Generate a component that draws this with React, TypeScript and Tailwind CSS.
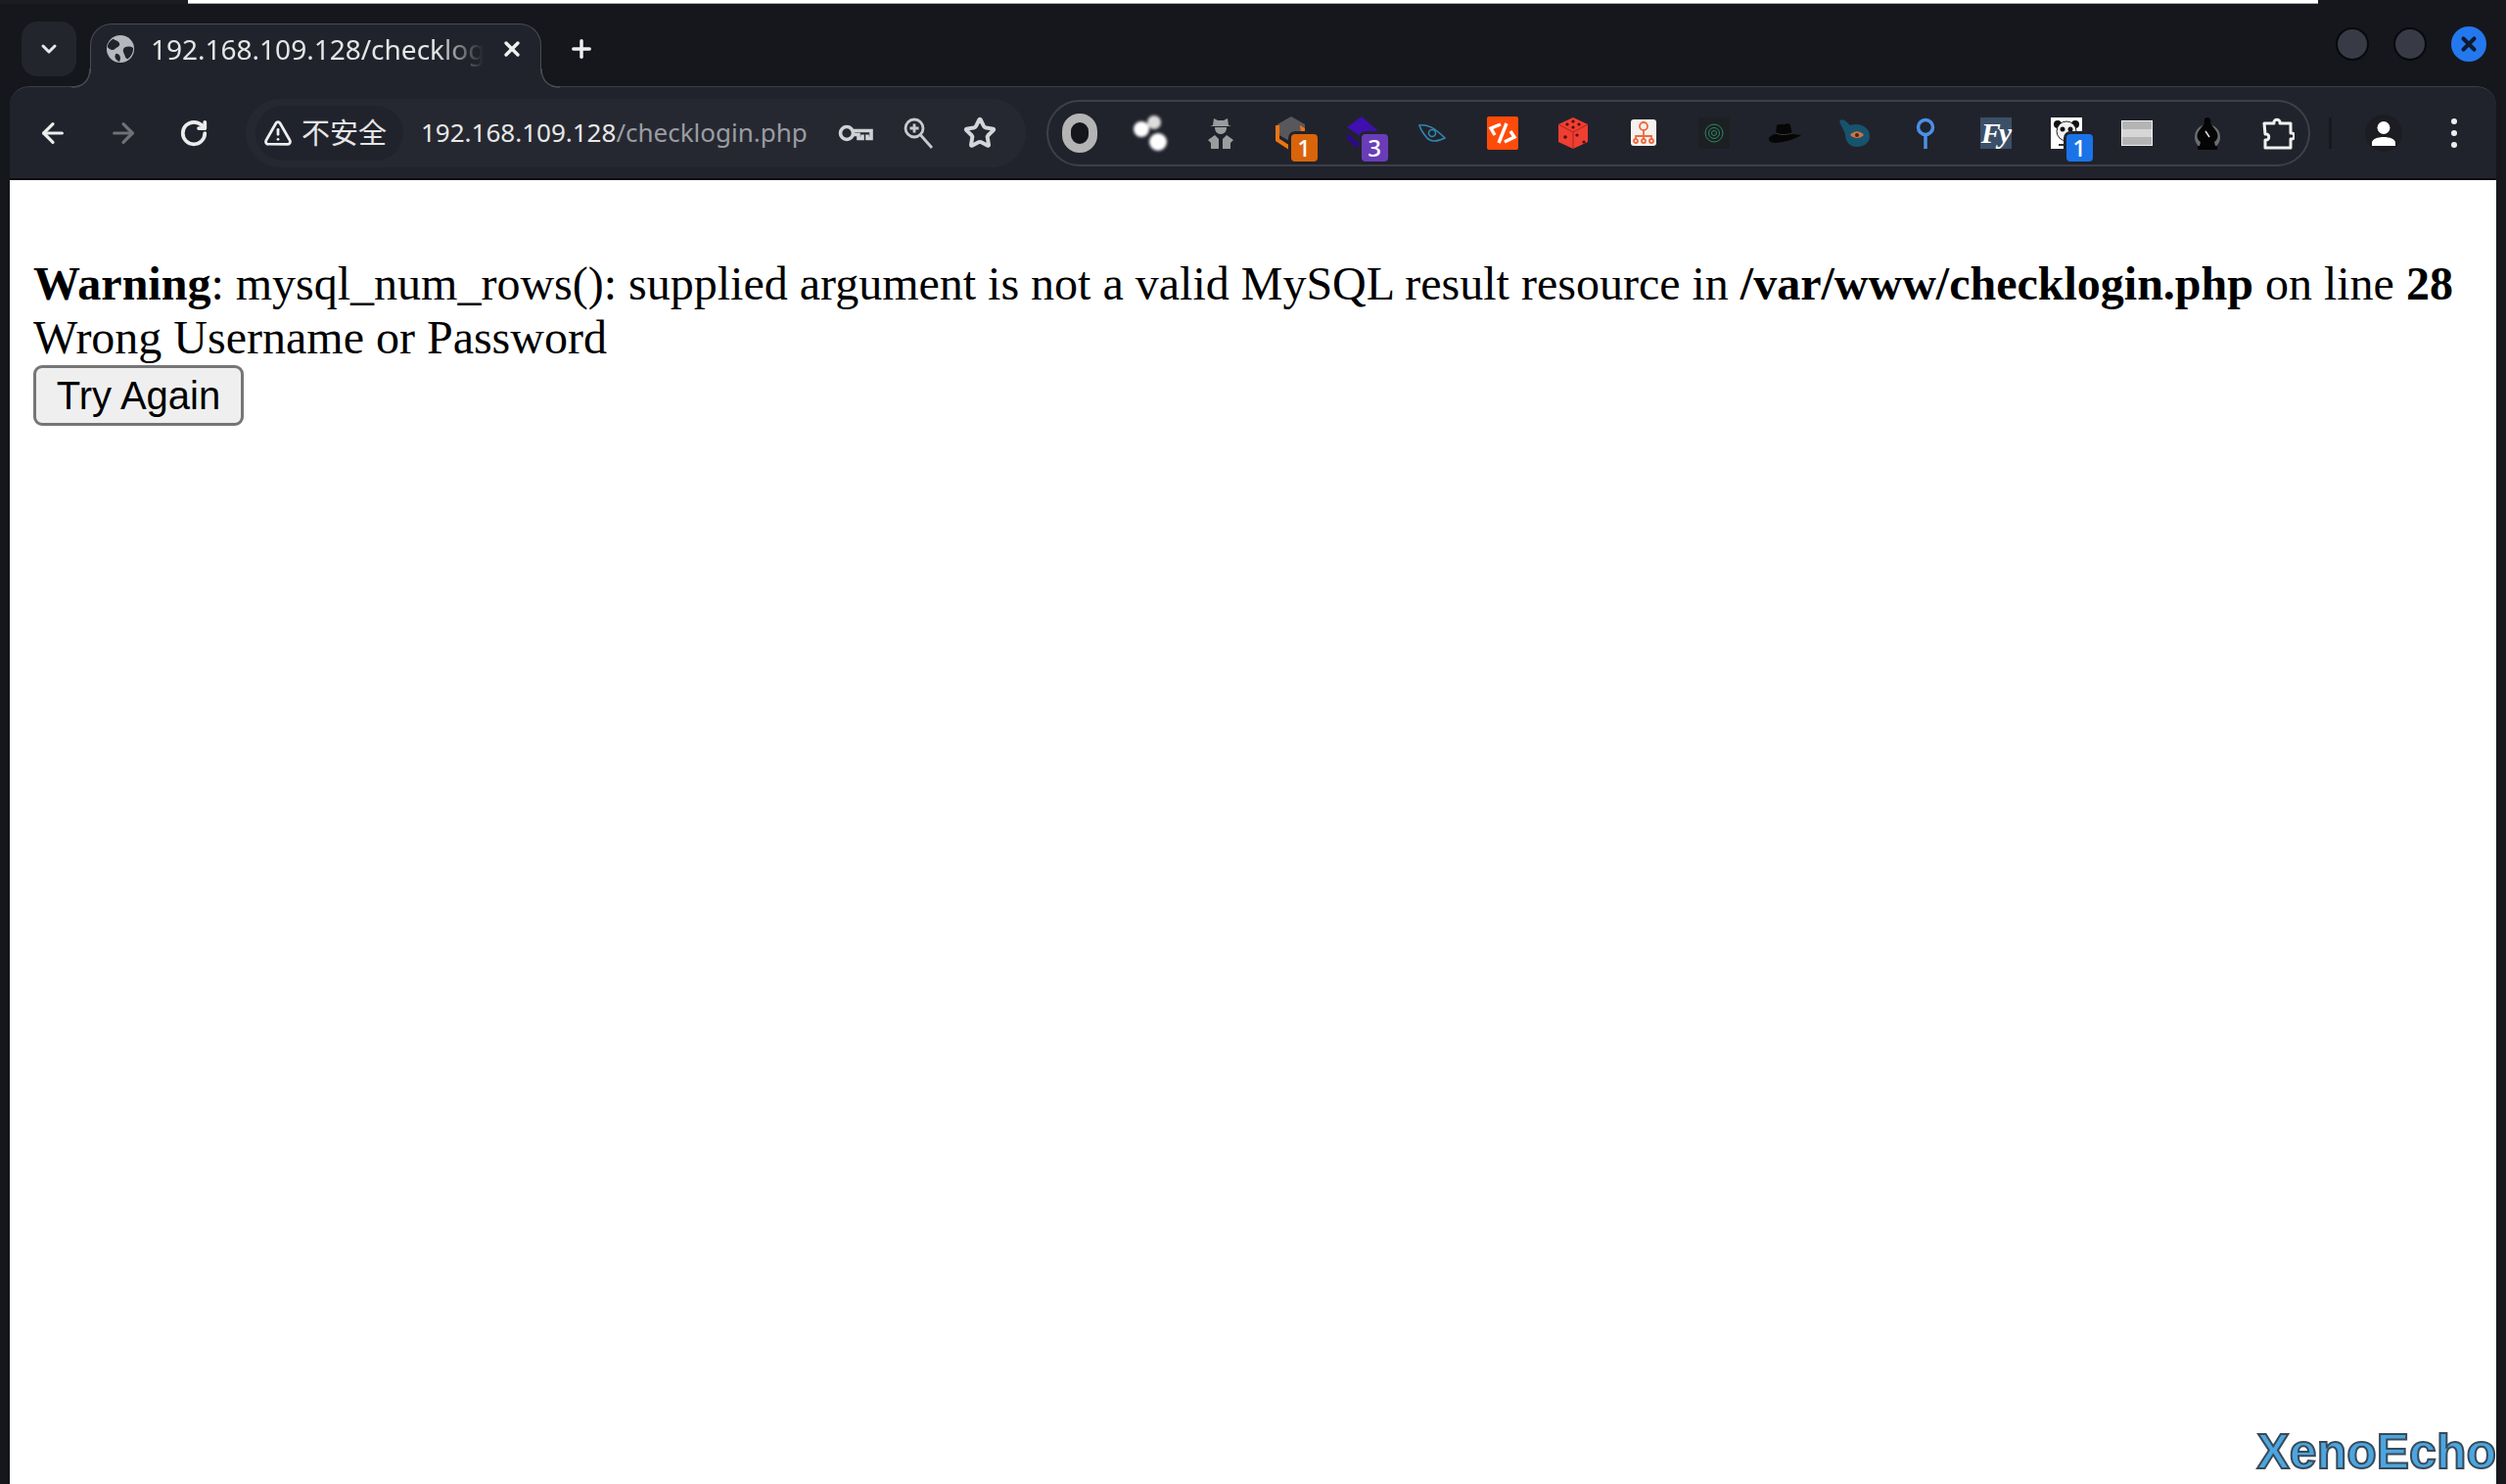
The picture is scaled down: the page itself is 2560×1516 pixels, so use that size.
import React from 'react';
import { ArrowLeft, ArrowRight, ChevronDown, Plus, RotateCw, Star, TriangleAlert, X } from 'lucide-react';

const Slot: React.FC<{ children: React.ReactNode; badge?: string; badgeColor?: string }> = ({ children, badge, badgeColor }) => (
  <div className="relative flex h-[64px] w-[72px] shrink-0 items-center justify-center">
    {children}
    {badge && (
      <span className={`absolute left-[33px] top-[30px] flex h-[34px] w-[33px] items-center justify-center rounded-[7px] border-[3px] border-[#21232c] text-[24px] font-medium leading-none text-white ${badgeColor}`}>
        {badge}
      </span>
    )}
  </div>
);

const Globe = () => (
  <svg viewBox="0 0 32 32" className="h-[30px] w-[30px]">
    <circle cx="16" cy="16" r="15" fill="#b4b7bd" />
    <path d="M8 5c3 2 6 2 7 5s-3 4-5 6-5 1-8-2c0-4 3-7 6-9zM21 14c3-1 6-1 9 1 0 5-2 9-6 12-3-1-3-4-4-6s-2-5 1-7zM11 21c3 0 5 2 5 5l-1 4c-3-1-5-4-5-6z" fill="#21232c" />
  </svg>
);

const Key = () => (
  <svg viewBox="0 0 36 20" fill="none" stroke="#d0d2d6" strokeWidth="3.6" className="h-[20px] w-[36px]">
    <circle cx="9" cy="10" r="6.5" />
    <path d="M15.5 7.5H34v8h-4v-4M25 11.5v4h-4v-4H15" />
  </svg>
);

const MagnifierPlus = () => (
  <svg viewBox="0 0 30 32" fill="none" stroke="#c8cacf" strokeWidth="2.8" className="h-[32px] w-[30px]">
    <circle cx="11" cy="11" r="9" />
    <path d="M17.5 18L29 31M11 6.5v9M6.5 11h9" />
  </svg>
);

const Spy = () => (
  <svg viewBox="0 0 28 32" fill="#9b9c9e" className="h-[34px] w-[28px]">
    <path d="M7 1l4 2h6l4-2 1 7 3 1H3l3-1z" />
    <path d="M8 10h12c0 4-2 7-6 7s-6-3-6-7z" />
    <path d="M8 18l-7 5 3 3v6h8V22zM20 18l7 5-3 3v6h-8V22z" />
  </svg>
);

const Hexagon = () => (
  <svg viewBox="0 0 32 36" className="h-[36px] w-[32px]">
    <path d="M16 1l14 8v10l-14 8-14-8V9z" fill="#58585c" />
    <path d="M2 10v15l14 9" fill="none" stroke="#f07410" strokeWidth="4" />
    <path d="M25 10l5 3v6h-4z" fill="#f07410" />
  </svg>
);

const PurpleStack = () => (
  <svg viewBox="0 0 34 36" className="h-[36px] w-[34px]">
    <path d="M17 1l16 14-12 10L2 12z" fill="#3f0fb0" />
    <path d="M2 18l10 8 12 8-14-2-8-8z" fill="#2d0a85" />
  </svg>
);

const EyeOutline = () => (
  <svg viewBox="0 0 28 22" fill="none" stroke="#3187b0" strokeWidth="1.6" className="h-[22px] w-[28px]">
    <path d="M1 3c7-1 14 1 26 13-8 4-15 4-19-1S2 7 1 3z" />
    <circle cx="14" cy="11" r="3.5" />
  </svg>
);

const CodeBox = () => (
  <div className="flex h-[34px] w-[32px] items-center justify-center rounded-[2px] bg-[#ff4b0a]">
    <svg viewBox="0 0 32 34" fill="none" stroke="#fff" strokeWidth="3.4" className="h-[34px] w-[32px]">
      <path d="M14 8L4 12l4 7M18 26l10-5-4-6M20 7L12 27" />
    </svg>
  </div>
);

const Dice = () => (
  <svg viewBox="0 0 32 34" className="h-[34px] w-[32px]">
    <path d="M16 1l15 7v18l-15 7-15-7V8z" fill="#ef3e32" />
    <path d="M16 16v17M1 8l15 8 15-8" fill="none" stroke="#b4231b" strokeWidth="1" />
    <g fill="#4d0f0b">
      <circle cx="16" cy="5" r="1.6" /><circle cx="10" cy="8" r="1.6" /><circle cx="22" cy="8" r="1.6" /><circle cx="16" cy="11" r="1.6" />
      <circle cx="8" cy="21" r="1.8" /><circle cx="20" cy="19" r="1.6" /><circle cx="27" cy="26" r="1.6" />
    </g>
  </svg>
);

const OrgChart = () => (
  <div className="flex h-[27px] w-[26px] items-center justify-center rounded-[3px] bg-[#f5f1ee]">
    <svg viewBox="0 0 26 27" fill="none" stroke="#ef6a3c" strokeWidth="1.8" className="h-[27px] w-[26px]">
      <circle cx="13" cy="7" r="4" />
      <path d="M13 11v5M5 21v-4h16v4M13 16v5" />
      <circle cx="5" cy="22" r="2" /><circle cx="13" cy="22" r="2" /><circle cx="21" cy="22" r="2" />
    </svg>
  </div>
);

const Radar = () => (
  <div className="flex h-[32px] w-[32px] items-center justify-center bg-[#1c2022]">
    <svg viewBox="0 0 20 20" fill="none" stroke="#2b8a62" strokeWidth="1" className="h-[20px] w-[20px]">
      <circle cx="10" cy="10" r="9" />
      <circle cx="10" cy="10" r="5.5" />
      <circle cx="10" cy="10" r="2.5" />
    </svg>
  </div>
);

const Hat = () => (
  <svg viewBox="0 0 34 22" className="h-[22px] w-[34px]">
    <path d="M9 3c3-2 6 0 8-1 3-1 5-1 6 1l2 9 9 1c-6 4-16 7-26 8-4 0-8-2-7-5 1-2 5-4 7-4z" fill="#060606" />
    <path d="M8 11c5 2 11 2 17 0" fill="none" stroke="#3a3a3a" strokeWidth="1" />
  </svg>
);

const PanEye = () => (
  <svg viewBox="0 0 34 30" className="h-[30px] w-[34px]">
    <path d="M1 3c2-3 5-2 8 1l3 3c8-3 20 1 20 11 0 7-6 11-13 11-8 0-12-6-12-13z" fill="#18536e" />
    <path d="M12 17c4-5 10-5 14 0-4 4-10 4-14 0z" fill="#c97346" />
    <circle cx="19" cy="17" r="2" fill="#4a2412" />
  </svg>
);

const Pin = () => (
  <svg viewBox="0 0 20 32" fill="none" stroke="#4a90e8" strokeWidth="3.5" className="h-[32px] w-[20px]">
    <circle cx="10" cy="10" r="7.5" />
    <path d="M10 18v14" />
  </svg>
);

const FyBox = () => (
  <div className="flex h-[32px] w-[32px] items-center justify-center bg-[#3b5068] font-['Liberation_Serif',serif] text-[30px] font-bold italic leading-none tracking-[-2px] text-white">
    Fy
  </div>
);

const Panda = () => (
  <svg viewBox="0 0 32 32" className="h-[32px] w-[32px]">
    <rect width="32" height="32" fill="#fff" />
    <circle cx="7" cy="7" r="4" fill="#111" />
    <circle cx="25" cy="7" r="4" fill="#111" />
    <circle cx="16" cy="14" r="10" fill="#f2f2f2" stroke="#222" strokeWidth="1" />
    <circle cx="12" cy="12" r="2.5" fill="#111" />
    <circle cx="20" cy="12" r="2.5" fill="#111" />
    <path d="M8 28h16" stroke="#333" strokeWidth="2" />
  </svg>
);

const Stripes = () => (
  <div className="flex h-[26px] w-[32px] flex-col border border-[#f0f0f0]">
    <div className="flex-1 bg-[#b4b4b4]" />
    <div className="flex-1 bg-[#d6d6d6]" />
    <div className="flex-1 bg-[#b4b4b4]" />
  </div>
);

const Bishop = () => (
  <svg viewBox="0 0 34 34" className="h-[34px] w-[34px]">
    <circle cx="17" cy="21" r="13" fill="#6c6d70" />
    <path d="M17 1c3 0 4 3 3 6l6 8c3 5 1 9-2 11l1 4H9l1-4c-3-2-5-6-2-11l6-8c-1-3 0-6 3-6z" fill="#050505" />
    <path d="M7 30h20v4H7z" fill="#050505" />
    <path d="M15 15l4 6" stroke="#ddd" strokeWidth="1.5" />
  </svg>
);

const PuzzleIcon = () => (
  <svg viewBox="0 0 34 34" fill="none" stroke="#f1f1f1" strokeWidth="3" strokeLinejoin="round" className="h-[34px] w-[34px]">
    <path d="M3 7h10c-1-5 7-5 6 0h11v10c5-1 5 7 0 6v9H4v-8c5 1 5-7 0-6z" />
  </svg>
);

const Person = () => (
  <svg viewBox="0 0 26 26" fill="#fff" className="h-[26px] w-[26px]">
    <circle cx="13" cy="7.5" r="6.5" />
    <path d="M1 26v-3c0-4 6-6 12-6s12 2 12 6v3z" />
  </svg>
);

export default function App() {
  return (
    <div className="relative flex h-[1516px] w-[2560px] flex-col overflow-hidden bg-[#15171c] font-['Noto_Sans','Noto_Sans_CJK_SC',sans-serif]">
      <div className="flex h-[4px] shrink-0">
        <div className="w-[192px] bg-[#1a1c22]" />
        <div className="w-[2176px] border-b border-[#aaaaaa] bg-white" />
      </div>

      <div className="flex min-h-0 flex-1 flex-col pl-[10px] pr-[10px]">
        {/* tab strip */}
        <div className="flex h-[84px] shrink-0 items-end bg-[#16171c]">
          <div className="mb-[10px] ml-[12px] flex h-[56px] w-[56px] items-center justify-center rounded-[16px] bg-[#23252c] text-[#e8e8e8]">
            <ChevronDown className="h-[24px] w-[24px]" strokeWidth={3} />
          </div>
          <div className="relative z-10 -mb-[2px] ml-[14px] flex h-[66px] w-[461px] items-center rounded-t-[22px] border-[1.5px] border-b-0 border-[#4a4c55] bg-[#21232c] pb-[15px] pl-[15px]">
            <svg viewBox="0 0 20 20" className="absolute -left-[20px] bottom-0 h-[20px] w-[20px]">
              <path d="M0 20C12 20 20 12 20 0V20z" fill="#21232c" />
              <path d="M0 19C12 19 19 12 19 0" fill="none" stroke="#4a4c55" strokeWidth="1.5" />
            </svg>
            <svg viewBox="0 0 20 20" className="absolute -right-[20px] bottom-0 h-[20px] w-[20px]">
              <path d="M20 20C8 20 0 12 0 0V20z" fill="#21232c" />
              <path d="M20 19C8 19 1 12 1 0" fill="none" stroke="#4a4c55" strokeWidth="1.5" />
            </svg>
            <Globe />
            <span className="ml-[16px] w-[340px] overflow-hidden whitespace-nowrap text-[28px] text-[#e6e6e6] [mask-image:linear-gradient(to_right,black_86%,transparent)]">
              192.168.109.128/checklogin.php
            </span>
            <X className="ml-[17px] h-[24px] w-[24px] text-[#f0f0f0]" strokeWidth={3.5} />
          </div>
          <Plus className="mb-[24px] ml-[27px] h-[28px] w-[28px] text-[#eeeeee]" strokeWidth={3} />
          <div className="mb-[25px] ml-auto mr-[10px] flex items-center gap-[25px]">
            <div className="h-[34px] w-[34px] rounded-full border-2 border-[#08090b] bg-[#383b46]" />
            <div className="h-[34px] w-[34px] rounded-full border-2 border-[#08090b] bg-[#383b46]" />
            <div className="flex h-[36px] w-[36px] items-center justify-center rounded-full bg-[#2478ee]">
              <X className="h-[22px] w-[22px] text-[#0d1a30]" strokeWidth={4.5} />
            </div>
          </div>
        </div>

        {/* toolbar */}
        <div className="flex h-[94px] shrink-0 items-center rounded-t-[20px] border-t-[1.5px] border-[#3c3e48] bg-[#21232c] pl-[8px]">
          <div className="flex h-[64px] w-[72px] items-center justify-center text-[#ececec]">
            <ArrowLeft className="h-[32px] w-[32px]" strokeWidth={2.4} />
          </div>
          <div className="flex h-[64px] w-[72px] items-center justify-center text-[#6f7177]">
            <ArrowRight className="h-[32px] w-[32px]" strokeWidth={2.4} />
          </div>
          <div className="flex h-[64px] w-[72px] items-center justify-center text-[#ececec]">
            <RotateCw className="h-[30px] w-[30px]" strokeWidth={3} />
          </div>

          <div className="ml-[17px] flex h-[70px] w-[797px] shrink-0 items-center rounded-full bg-[#262831] pl-[10px]">
            <div className="flex h-[56px] w-[151px] items-center rounded-full bg-[#21232c] pl-[8px]">
              <TriangleAlert className="h-[30px] w-[30px] text-[#eeeeee]" strokeWidth={2.2} />
              <span className="ml-[9px] text-[29px] leading-none text-[#e6e6e6]">不安全</span>
            </div>
            <span className="ml-[18px] w-[400px] whitespace-nowrap text-[26px] text-[#e8e8e8]">
              192.168.109.128<span className="text-[#9a9da3]">/checklogin.php</span>
            </span>
            <div className="ml-[26px] flex items-center">
              <Key />
              <div className="ml-[31px]"><MagnifierPlus /></div>
              <Star className="ml-[31px] h-[34px] w-[34px] text-[#d4d6da]" strokeWidth={2.8} />
            </div>
          </div>

          <div className="ml-[21px] flex h-[68px] w-[1291px] shrink-0 items-center justify-center rounded-full border-2 border-[#3e4049]">
            <Slot><div className="h-[40px] w-[36px] rounded-full border-[9px] border-[#b4b4b4] bg-[#15161c]" /></Slot>
            <Slot>
              <div className="relative h-[36px] w-[34px] blur-[1.5px]">
                <div className="absolute left-[14px] top-0 h-[14px] w-[14px] rounded-full bg-[#dddddd]" />
                <div className="absolute left-0 top-[6px] h-[16px] w-[16px] rounded-full bg-white" />
                <div className="absolute bottom-0 right-0 h-[18px] w-[18px] rounded-full bg-white" />
              </div>
            </Slot>
            <Slot><Spy /></Slot>
            <Slot badge="1" badgeColor="bg-[#d9640a]"><Hexagon /></Slot>
            <Slot badge="3" badgeColor="bg-[#6a3db8]"><PurpleStack /></Slot>
            <Slot><EyeOutline /></Slot>
            <Slot><CodeBox /></Slot>
            <Slot><Dice /></Slot>
            <Slot><OrgChart /></Slot>
            <Slot><Radar /></Slot>
            <Slot><Hat /></Slot>
            <Slot><PanEye /></Slot>
            <Slot><Pin /></Slot>
            <Slot><FyBox /></Slot>
            <Slot badge="1" badgeColor="bg-[#1b73e8]"><Panda /></Slot>
            <Slot><Stripes /></Slot>
            <Slot><Bishop /></Slot>
            <Slot><PuzzleIcon /></Slot>
          </div>

          <div className="ml-[19px] h-[32px] w-[3px] shrink-0 bg-[#17181e]" />
          <div className="ml-[17px] flex h-[64px] w-[72px] shrink-0 items-center justify-center">
            <div className="flex h-[38px] w-[38px] items-center justify-center rounded-full bg-[#1c1d22]"><Person /></div>
          </div>
          <div className="flex h-[64px] w-[72px] shrink-0 flex-col items-center justify-center gap-[6px]">
            <div className="h-[6px] w-[6px] rounded-full bg-[#eeeeee]" />
            <div className="h-[6px] w-[6px] rounded-full bg-[#eeeeee]" />
            <div className="h-[6px] w-[6px] rounded-full bg-[#eeeeee]" />
          </div>
        </div>
        <div className="h-[2px] shrink-0 bg-[#0c0d10]" />

        {/* page */}
        <div className="min-h-0 flex-1 bg-white pl-[24px] pt-[78px] font-['Liberation_Serif',serif] text-[48px] leading-[55px] text-black">
          <div className="whitespace-nowrap">
            <b>Warning</b>: mysql_num_rows(): supplied argument is not a valid MySQL result resource in <b>/var/www/checklogin.php</b> on line <b>28</b>
          </div>
          <div>Wrong Username or Password</div>
          <button className="mt-[1px] block h-[62px] w-[215px] rounded-[9px] border-[3px] border-[#767676] bg-[#efefef] font-['Liberation_Sans',sans-serif] text-[40px] leading-none text-black">
            Try Again
          </button>
        </div>
      </div>

      <div className="absolute bottom-[6px] right-[10px] whitespace-nowrap font-['Liberation_Sans',sans-serif] text-[50px] font-bold leading-[54px] text-[#4ba6e0] [-webkit-text-stroke:2px_#3a4a58]">
        XenoEcho
      </div>
    </div>
  );
}
